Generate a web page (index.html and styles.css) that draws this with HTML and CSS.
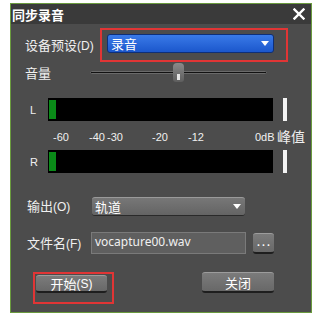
FILE: index.html
```html
<!DOCTYPE html>
<html lang="zh">
<head>
    <meta charset="UTF-8">
    <title>同步录音</title>
    <link rel="stylesheet" href="styles.css">
</head>
<body>

    <div class="window">
        <div class="titlebar">
            <span class="title">同步录音</span>
            <svg class="close-x" width="12" height="12" viewBox="0 0 12 12">
                <path d="M1.5 1.5 L10.5 10.5 M10.5 1.5 L1.5 10.5" stroke="#ffffff" stroke-width="2.4" stroke-linecap="square"/>
            </svg>
        </div>

        <div class="content">
            <div class="row preset-row">
                <span class="label preset-label">设备预设<span class="key">(D)</span></span>
                <div class="highlight preset-box">
                    <div class="select select-blue">
                        <span>录音</span>
                        <span class="arrow"></span>
                    </div>
                </div>
            </div>

            <div class="row volume-row">
                <span class="label volume-label">音量</span>
                <div class="slider">
                    <div class="track"></div>
                    <div class="thumb"><span class="notch"></span></div>
                </div>
            </div>

            <div class="row meter-row meter-l">
                <span class="channel">L</span>
                <div class="meter"><div class="level"></div></div>
                <div class="peak"></div>
            </div>

            <div class="scale">
                <span class="tick" style="left: 28px">-60</span>
                <span class="tick" style="left: 64px">-40</span>
                <span class="tick" style="left: 82px">-30</span>
                <span class="tick" style="left: 127px">-20</span>
                <span class="tick" style="left: 163px">-12</span>
                <span class="tick" style="left: 230px">0dB</span>
                <span class="tick peak-label" style="left: 252px">峰值</span>
            </div>

            <div class="row meter-row meter-r">
                <span class="channel">R</span>
                <div class="meter"><div class="level"></div></div>
                <div class="peak"></div>
            </div>

            <div class="row output-row">
                <span class="label field-label">输出<span class="key">(O)</span></span>
                <div class="select select-grey">
                    <span>轨道</span>
                    <span class="arrow"></span>
                </div>
            </div>

            <div class="row file-row">
                <span class="label field-label">文件名<span class="key">(F)</span></span>
                <div class="input">vocapture00.wav</div>
                <div class="btn browse">. . .</div>
            </div>

            <div class="row button-row">
                <div class="highlight start-box">
                    <div class="btn start">开始<span class="key">(S)</span></div>
                </div>
                <div class="btn close-btn">关闭</div>
            </div>
        </div>
    </div>

</body>
</html>
```

FILE: styles.css
```css
body {
    margin: 0;
    background: #ffffff;
    font-family: "Noto Sans CJK SC", "Noto Sans", sans-serif;
    color: #f0f0f0;
}
.window {
    width: 300px;
    height: 308px;
    margin: 3px 0 0 10px;
    border: 1px solid #6a9a3e;
    background: #4c4c4c;
}
.titlebar {
    height: 20px;
    background: #3a3a3a;
    display: flex;
    align-items: center;
    justify-content: space-between;
    padding: 0 6px 0 1px;
}
.title {
    font-weight: bold;
    font-size: 13px;
    color: #ffffff;
}
.content {
    padding-left: 14px;
}
.row {
    display: flex;
    align-items: center;
}
.label {
    font-size: 13px;
    line-height: 16px;
}
.key {
    font-family: "Liberation Sans", sans-serif;
    font-size: 12px;
}

/* device preset */
.preset-row {
    margin-top: 4px;
    height: 34px;
}
.preset-label {
    width: 75px;
}
.highlight {
    border: 2px solid #e03535;
    box-sizing: border-box;
}
.preset-box {
    width: 188px;
    height: 34px;
    padding: 4px 0 0 5px;
}
.select {
    display: flex;
    align-items: center;
    justify-content: space-between;
    box-sizing: border-box;
    border-radius: 3px;
    padding: 0 4px 0 3px;
    font-size: 13px;
    color: #ffffff;
}
.select-blue {
    width: 167px;
    height: 19px;
    background: linear-gradient(#3a7ae8, #1b57cc);
    border: 1px solid #0e2f78;
}
.arrow {
    width: 0;
    height: 0;
    border-left: 4px solid transparent;
    border-right: 4px solid transparent;
    border-top: 5px solid #ffffff;
}

/* volume */
.volume-row {
    margin-top: 1px;
    height: 20px;
}
.volume-label {
    width: 65px;
}
.slider {
    position: relative;
    width: 177px;
    height: 20px;
}
.track {
    position: absolute;
    left: 0;
    right: 0;
    top: 8px;
    height: 3px;
    background: #111111;
    border: 1px solid #6a6a6a;
    border-radius: 2px;
    box-sizing: border-box;
}
.thumb {
    position: absolute;
    left: 83px;
    top: 0;
    width: 11px;
    height: 19px;
    background: linear-gradient(#8a8a8a, #5e5e5e);
    border-radius: 4px 4px 3px 3px;
    display: flex;
    justify-content: center;
    align-items: flex-end;
}
.notch {
    width: 3px;
    height: 6px;
    margin-bottom: 2px;
    background: #e6e6e6;
}

/* meters */
.meter-row {
    height: 23px;
}
.meter-l {
    margin-top: 15px;
}
.channel {
    width: 23px;
    padding-left: 5px;
    box-sizing: border-box;
    font-family: "Liberation Sans", sans-serif;
    font-size: 11px;
}
.meter {
    width: 225px;
    height: 23px;
    background: #000000;
    padding: 2px 0 0 1px;
    box-sizing: border-box;
}
.level {
    width: 7px;
    height: 19px;
    background: #0a8a18;
}
.peak {
    width: 4px;
    height: 23px;
    margin-left: 10px;
    background: #f4f4f4;
}
.scale {
    position: relative;
    height: 29px;
}
.tick {
    position: absolute;
    top: 9px;
    font-family: "Liberation Sans", sans-serif;
    font-size: 11px;
    line-height: 14px;
}
.peak-label {
    top: 6px;
    font-family: "Noto Sans CJK SC", sans-serif;
    font-size: 14px;
    line-height: 18px;
}

/* output & file */
.output-row {
    margin-top: 24px;
    height: 19px;
}
.field-label {
    width: 65px;
    padding-left: 2px;
    box-sizing: border-box;
}
.select-grey {
    width: 153px;
    height: 19px;
    margin-left: 2px;
    background: linear-gradient(#777777, #646464);
    border-top: 1px solid #9a9a9a;
    border-bottom: 1px solid #2a2a2a;
}
.file-row {
    margin-top: 16px;
    height: 22px;
}
.input {
    width: 155px;
    height: 22px;
    margin-left: 1px;
    box-sizing: border-box;
    background: #5f5f5f;
    border: 1px solid #7a7a7a;
    padding: 0 3px;
    font-family: "Noto Sans", sans-serif;
    font-size: 12px;
    line-height: 18px;
    color: #f0f0f0;
}
.btn {
    display: flex;
    align-items: center;
    justify-content: center;
    box-sizing: border-box;
    background: linear-gradient(#7b7b7b, #686868);
    border-top: 1px solid #9c9c9c;
    border-bottom: 2px solid #1e1e1e;
    border-radius: 3px;
    font-size: 13px;
    color: #ffffff;
}
.browse {
    width: 21px;
    height: 21px;
    margin-left: 7px;
    font-size: 9px;
    font-weight: bold;
    align-items: flex-end;
    padding-bottom: 3px;
}

/* buttons */
.button-row {
    margin-top: 18px;
    align-items: flex-start;
}
.start-box {
    width: 81px;
    height: 32px;
    margin-left: 8px;
    padding: 1px 0 0 1px;
}
.start {
    width: 71px;
    height: 18px;
}
.close-btn {
    width: 72px;
    height: 21px;
    margin-left: 88px;
}
```
